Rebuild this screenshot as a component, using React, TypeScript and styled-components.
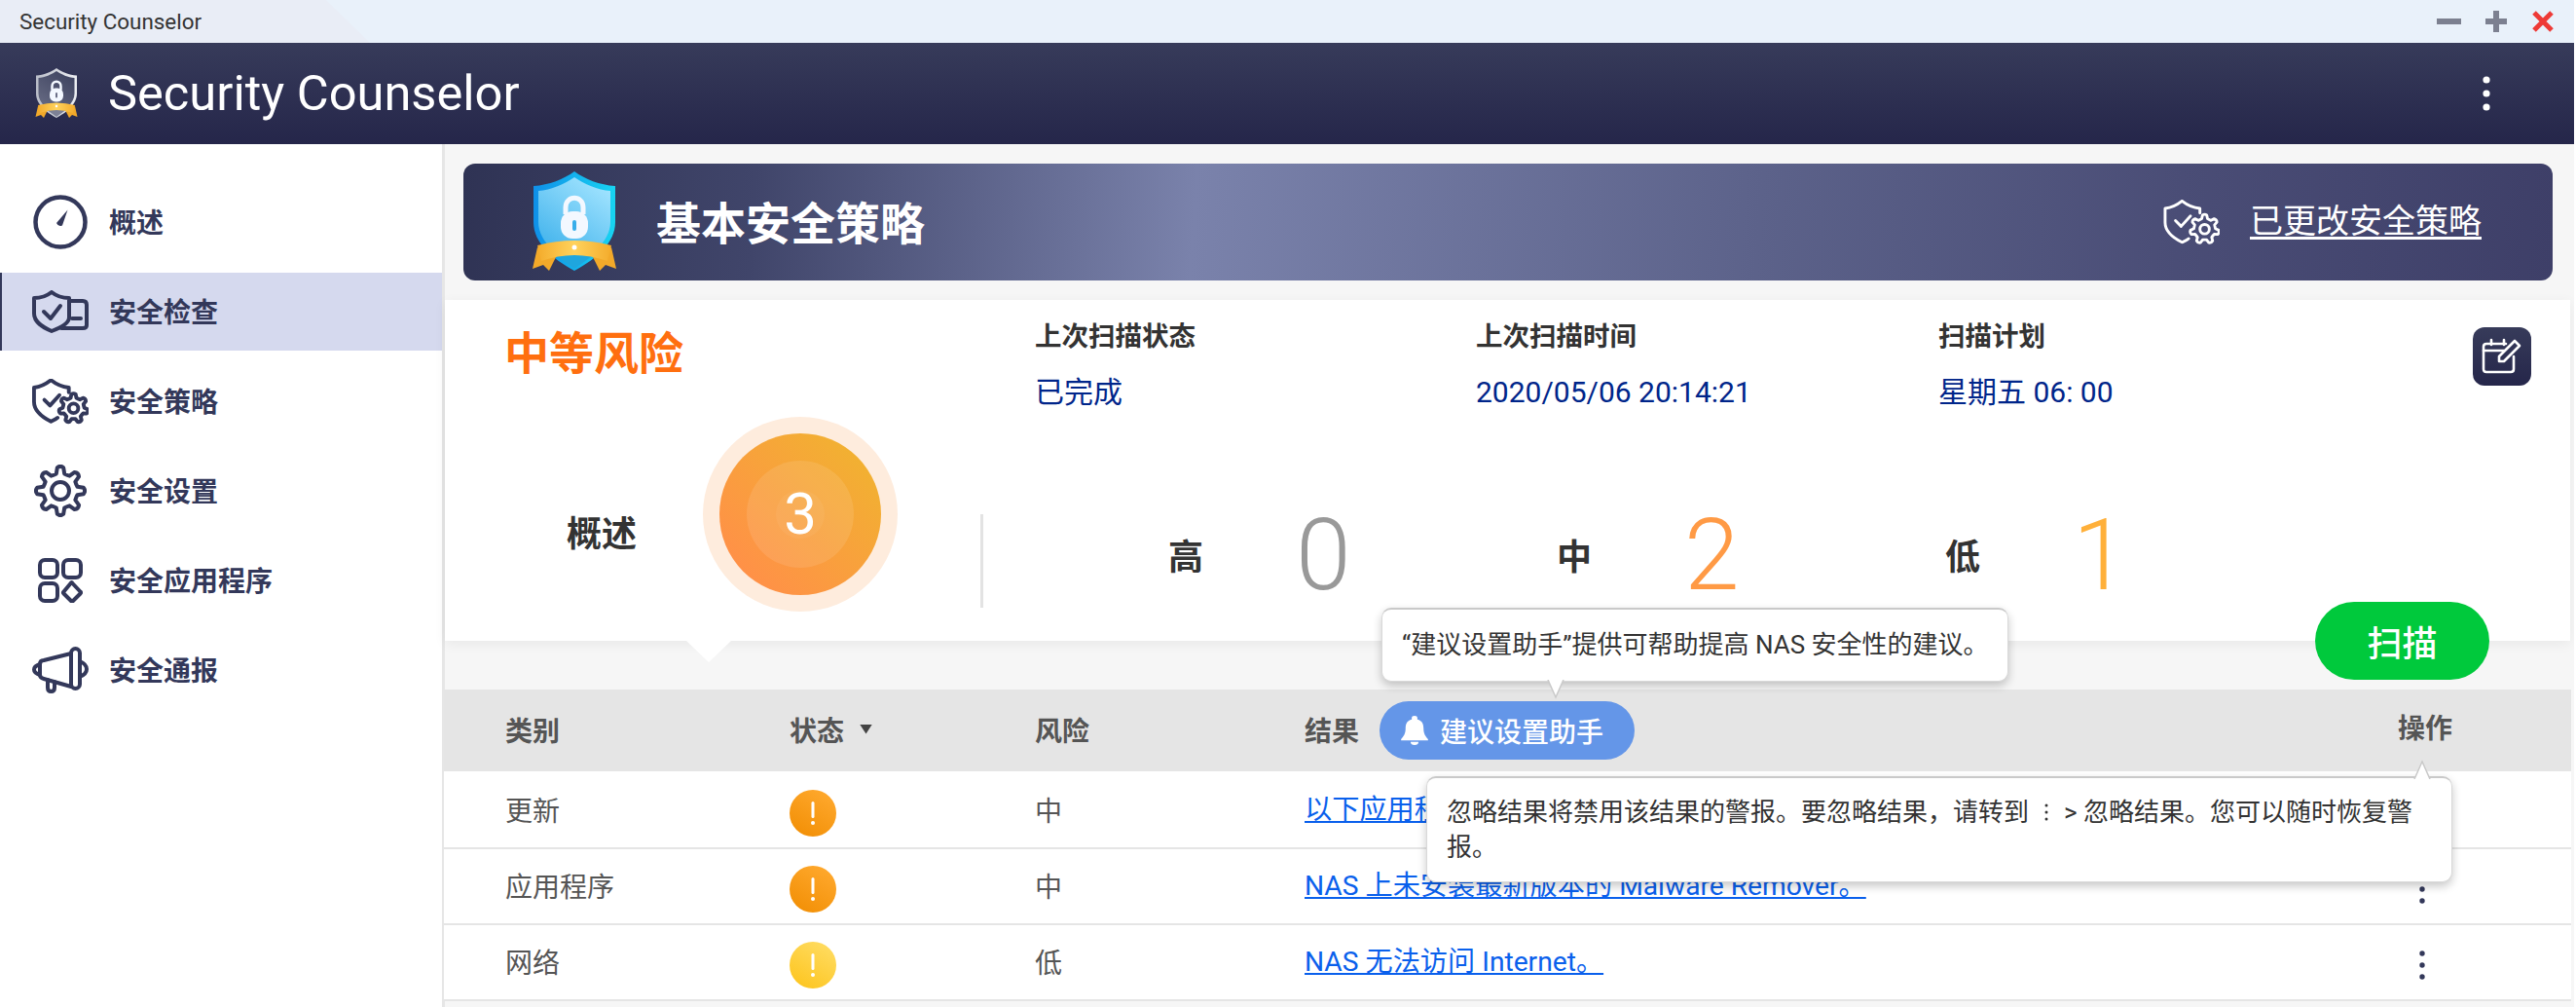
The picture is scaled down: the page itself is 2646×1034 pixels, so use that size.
import React, { useId } from "react";
import styled, { createGlobalStyle } from "styled-components";

const Global = createGlobalStyle`
  html, body { margin: 0; padding: 0; background: #fff; }
  body { font-family: Roboto, "Noto Sans CJK SC", sans-serif; overflow: hidden; }
  * { box-sizing: border-box; }
`;

const Win = styled.div`
  width: 2644px;
  height: 1034px;
  display: flex;
  flex-direction: column;
  overflow: hidden;
`;
const TitleBar = styled.div`
  height: 44px;
  flex: none;
  display: flex;
  align-items: center;
  justify-content: space-between;
  background: #e9f1fa;
`;
const TitleTab = styled.div`
  height: 44px;
  width: 380px;
  padding-left: 20px;
  display: flex;
  align-items: center;
  font-size: 22.4px;
  color: #333;
  background: #e9edf6;
  clip-path: polygon(0 0, 335px 0, 380px 100%, 0 100%);
`;
const WinControls = styled.div`
  display: flex;
  align-items: center;
  gap: 24px;
  padding-right: 20px;
`;
const AppHeader = styled.header`
  height: 104px;
  flex: none;
  display: flex;
  align-items: center;
  padding: 0 86px 0 35px;
  background: linear-gradient(#373b5a, #25264a);
  color: #fff;
`;
const AppTitle = styled.h1`
  margin: 0 0 0 30px;
  font-size: 50.6px;
  font-weight: 400;
  line-height: 56px;
  flex: 1;
`;
const Body = styled.div`
  flex: 1;
  display: flex;
  min-height: 0;
`;
const Sidebar = styled.nav`
  width: 457px;
  flex: none;
  padding-top: 40px;
  background: #fff;
  border-right: 3px solid #e6e6e6;
  display: flex;
  flex-direction: column;
  gap: 12px;
`;
const NavItem = styled.div<{ $active?: boolean }>`
  height: 80px;
  display: flex;
  align-items: center;
  gap: 21px;
  padding-left: 33px;
  font-size: 28px;
  font-weight: 700;
  color: #33385a;
  background: ${(p) => (p.$active ? "#d5d9ee" : "transparent")};
  box-shadow: ${(p) => (p.$active ? "inset 2px 0 0 #33385a" : "none")};
`;
const NavIcon = styled.span`
  width: 58px;
  flex: none;
  display: flex;
  justify-content: center;
`;
const NavLabel = styled.span`
  padding-bottom: 3px;
`;
const Content = styled.main`
  flex: 1;
  min-width: 0;
  background: #f6f6f6;
  display: flex;
  flex-direction: column;
`;
const Banner = styled.section`
  height: 120px;
  flex: none;
  margin: 20px 22px 20px 19px;
  border-radius: 12px;
  display: flex;
  align-items: center;
  padding: 0 73px 0 70px;
  color: #fff;
  background: linear-gradient(94deg, #2f3354 0%, #40456a 14%, #7a82ab 35%, #5c628a 62%, #4a4d76 82%, #3e3f68 100%);
`;
const BannerTitle = styled.h2`
  margin: 0 0 4px 40px;
  font-size: 46px;
  font-weight: 700;
  flex: 1;
`;
const BannerLink = styled.a`
  margin: 0 0 2px 31px;
  font-size: 34px;
  line-height: 44px;
  text-decoration: underline;
  text-underline-offset: 4px;
`;
const Panel = styled.section`
  position: relative;
  height: 350px;
  flex: none;
  margin-right: 4px;
  padding-top: 20px;
  background: #fff;
  box-shadow: 0 3px 12px rgba(0, 0, 0, 0.06);
`;
const PanelTop = styled.div`
  display: grid;
  grid-template-columns: 606px 453px 475px 1fr auto;
`;
const RiskTitle = styled.div`
  padding-left: 61px;
  margin-top: 5px;
  font-size: 46px;
  line-height: 60px;
  font-weight: 700;
  color: #ff6f0f;
`;
const InfoLabel = styled.div`
  padding-top: 1px;
  font-size: 27.5px;
  line-height: 34px;
  font-weight: 700;
  color: #333;
`;
const InfoValue = styled.div`
  margin-top: 23px;
  font-size: 30px;
  line-height: 34px;
  color: #00258a;
`;
const EditButton = styled.div`
  margin: 8px 40px 0 0;
  width: 60px;
  height: 60px;
  border-radius: 12px;
  display: flex;
  align-items: center;
  justify-content: center;
  background: linear-gradient(#373b5a, #25264a);
`;
const Overview = styled.div`
  display: flex;
  align-items: flex-start;
  padding-left: 125px;
  margin-top: 8px;
`;
const OverviewLabel = styled.div`
  width: 72px;
  margin-top: 96px;
  font-size: 36px;
  line-height: 50px;
  font-weight: 700;
  color: #333;
`;
const Halo = styled.div`
  margin-left: 68px;
  width: 200px;
  height: 200px;
  flex: none;
  border-radius: 50%;
  background: #feecdd;
  display: flex;
  align-items: center;
  justify-content: center;
`;
const Disc = styled.div`
  width: 166px;
  height: 166px;
  border-radius: 50%;
  background: linear-gradient(225deg, #f2b032 15%, #ff9147 85%);
  display: flex;
  align-items: center;
  justify-content: center;
`;
const DiscRing = styled.div`
  width: 110px;
  height: 110px;
  border-radius: 50%;
  background: rgba(255, 255, 255, 0.1);
  display: flex;
  align-items: center;
  justify-content: center;
`;
const DiscCore = styled.div`
  width: 50px;
  height: 50px;
  border-radius: 50%;
  background: rgba(255, 255, 255, 0.05);
  display: flex;
  align-items: center;
  justify-content: center;
  color: #fff;
  font-size: 60px;
  font-weight: 400;
  line-height: 50px;
`;
const VRule = styled.div`
  margin: 100px 0 0 85px;
  width: 3px;
  height: 96px;
  background: #e3e3e3;
`;
const Stats = styled.div`
  margin: 92px 0 0 190px;
  display: flex;
`;
const Stat = styled.div`
  width: 399px;
  display: flex;
  align-items: center;
  gap: 95px;
`;
const StatLabel = styled.div`
  width: 36px;
  margin-top: -2px;
  font-size: 36px;
  font-weight: 700;
  color: #333;
`;
const StatValue = styled.div<{ $color: string }>`
  font-size: 102px;
  font-weight: 300;
  line-height: 100px;
  color: ${(p) => p.$color};
`;
const ScanButton = styled.button`
  position: absolute;
  left: 1921px;
  top: 310px;
  z-index: 2;
  width: 179px;
  height: 80px;
  border: 0;
  border-radius: 40px;
  background: #00c93c;
  color: #fff;
  font-family: inherit;
  font-size: 36px;
  font-weight: 500;
`;
const Notch = styled.div`
  position: absolute;
  left: 248px;
  top: 100%;
  width: 46px;
  height: 22px;
  background: #fff;
  clip-path: polygon(0 0, 100% 0, 50% 100%);
`;
const Table = styled.section`
  margin: 50px 3px 0 -1px;
`;
const HeaderRow = styled.div`
  height: 84px;
  display: grid;
  grid-template-columns: 292px 252px 277px 1123px 1fr;
  padding: 0 0 3px 63px;
  align-items: center;
  background: #e5e5e5;
  font-size: 28px;
  font-weight: 700;
  color: #555;
`;
const HeaderCell = styled.div`
  display: flex;
  align-items: center;
`;
const SortMark = styled.span`
  margin-left: 16px;
  width: 13px;
  height: 10px;
  background: #444;
  clip-path: polygon(0 0, 100% 0, 50% 100%);
`;
const Pill = styled.div`
  position: relative;
  margin: 3px 0 0 21px;
  width: 262px;
  height: 60px;
  border-radius: 30px;
  background: #6496e8;
  color: #fff;
  font-weight: 500;
  display: flex;
  align-items: center;
  padding-left: 21px;
  gap: 11px;
`;
const Tip = styled.div`
  position: absolute;
  z-index: 5;
  background: #fff;
  color: #333;
  font-size: 26px;
  font-weight: 400;
  line-height: 36px;
  border: 1px solid #d8d8d8;
  border-top: 2px solid #c9c9c9;
  border-radius: 10px;
  box-shadow: 0 4px 10px rgba(0, 0, 0, 0.22);
`;
const TipAbove = styled(Tip)`
  left: 2px;
  bottom: calc(100% + 20px);
  width: 644px;
  height: 76px;
  padding: 18px 0 0 20px;
  white-space: nowrap;
`;
const ActionLabel = styled.span`
  position: relative;
  display: block;
  line-height: 34px;
`;
const TipBelow = styled(Tip)`
  right: 0;
  top: calc(100% + 31px);
  width: 1054px;
  height: 109px;
  padding: 17px 30px 0 20px;
`;
const TipArrow = styled.svg<{ $up?: boolean }>`
  position: absolute;
  display: block;
  ${(p) => (p.$up ? "top: -19px; right: 20px;" : "bottom: -19px; left: 168px;")}
`;
const Row = styled.div`
  height: 78px;
  display: grid;
  grid-template-columns: 292px 252px 277px 1123px 1fr;
  padding: 0 0 2px 63px;
  align-items: center;
  background: #fff;
  border-bottom: 2px solid #e5e5e5;
  font-size: 28px;
  color: #555;
  &:nth-child(2) {
    height: 80px;
    padding-bottom: 0;
  }
`;
const StatusIcon = styled.svg`
  display: block;
  margin-top: 7px;
`;
const LinkCell = styled.a`
  color: #0a60ec;
  font-size: 28.2px;
  line-height: 34px;
  padding-top: 2px;
  text-decoration: underline;
  white-space: nowrap;
`;
const RowKebab = styled.svg`
  display: block;
  margin: 7px 0 0 22px;
`;
const InlineKebab = styled.svg`
  margin: 0 16px;
  vertical-align: -1px;
`;

const INK = "#33385a";

const gearPath = (cx: number, cy: number, rOut: number, rIn: number, n: number) => {
  const pt = (r: number, a: number) => `${(cx + r * Math.cos(a)).toFixed(2)} ${(cy + r * Math.sin(a)).toFixed(2)}`;
  const step = (Math.PI * 2) / n;
  let d = "";
  for (let i = 0; i < n; i++) {
    const a = i * step - Math.PI / 2;
    const w1 = step * 0.17;
    const w2 = step * 0.3;
    d += `${i === 0 ? "M" : "L"}${pt(rIn, a - w2)} L${pt(rOut, a - w1)} Q${pt(rOut * 1.1, a)} ${pt(rOut, a + w1)} L${pt(rIn, a + w2)} Q${pt(rIn * 0.97, a + step / 2)} ${pt(rIn, a + step - w2)} `;
  }
  return d + "Z";
};

const ShieldOutline = "M39 14V9C30 8 25 5 20 1C15 5 10 8 2 9V24C2 33 10 40 20 45C22 44 25 43 27 41";

const PolicyIcon = ({ color, sw }: { color: string; sw: number }) => (
  <svg width="58" height="47" viewBox="0 0 60 48" fill="none" stroke={color} strokeWidth={sw} strokeLinecap="round" strokeLinejoin="round">
    <path d={ShieldOutline} />
    <path d="M13 22l6 6 10-11" />
    <path d={gearPath(44, 31, 15, 11.5, 7)} />
    <circle cx="44" cy="31" r="5" />
  </svg>
);

const GaugeIcon = () => (
  <svg width="56" height="56" viewBox="0 0 56 56" fill="none">
    <circle cx="28" cy="28" r="25.5" stroke={INK} strokeWidth="4.5" />
    <path d="M24 29L35.500 15.500L30 31.500Q26 33.500 24 29Z" fill={INK} />
  </svg>
);

const CheckIcon = () => (
  <svg width="58" height="44" viewBox="0 0 58 44" fill="none" stroke={INK} strokeWidth="4" strokeLinecap="round" strokeLinejoin="round">
    <path d="M20 2C25 6 31 8 38 8V28C38 34 28 39 20 42C11 38 2 33 2 24V8C9 8 15 6 20 2Z" />
    <path d="M12 22l7 7 10-13" />
    <path d="M38 11H52Q56 11 56 15V36Q56 39 52 39H30" />
    <path d="M41 29H50" />
  </svg>
);

const GearIcon = () => (
  <svg width="54" height="54" viewBox="0 0 54 54" fill="none" stroke={INK} strokeWidth="4" strokeLinejoin="round">
    <path d={gearPath(27, 27, 24, 18, 8)} />
    <circle cx="27" cy="27" r="9" />
  </svg>
);

const AppsIcon = () => (
  <svg width="46" height="46" viewBox="0 0 46 46" fill="none" stroke={INK} strokeWidth="4" strokeLinejoin="round">
    <rect x="2" y="2" width="18" height="18" rx="5" />
    <rect x="26" y="2" width="18" height="18" rx="5" />
    <rect x="2" y="26" width="18" height="18" rx="5" />
    <path d="M35 25.5L43.5 34.5Q44.5 35.5 43.5 36.5L36 44Q35 45 34 44L26.5 36.5Q25.5 35.5 26.5 34.5L34 25.5Q35 24.5 35 25.5Z" />
  </svg>
);

const MegaphoneIcon = () => (
  <svg width="58" height="48" viewBox="0 0 58 48" fill="none" stroke={INK} strokeWidth="4" strokeLinecap="round" strokeLinejoin="round">
    <path d="M40 7L12 14Q8 14 8 18V29Q8 32 12 33L40 41" />
    <rect x="40" y="2" width="9" height="41" rx="4.5" />
    <path d="M8 18Q2 20 2 23.5Q2 27 8 29" />
    <path d="M49 15Q56 18 56 23Q56 28 49 31" />
    <path d="M16 34V42Q16 46 19.5 46Q23 46 23 42V36" />
  </svg>
);

const Shield = ({ w, h, palette }: { w: number; h: number; palette: string[] }) => {
  const id = useId().replace(/[^a-zA-Z0-9]/g, "");
  const [o1, o2, i1, i2, tip] = palette;
  return (
    <svg width={w} height={h} viewBox="0 0 88 104">
      <defs>
        <linearGradient id={`${id}o`} x1="0" y1="0" x2="1" y2="0">
          <stop offset="0" stopColor={o1} />
          <stop offset="1" stopColor={o2} />
        </linearGradient>
        <linearGradient id={`${id}i`} x1="0.8" y1="0" x2="0.2" y2="1">
          <stop offset="0" stopColor={i1} />
          <stop offset="1" stopColor={i2} />
        </linearGradient>
        <linearGradient id={`${id}r`} x1="0" y1="0" x2="1" y2="0">
          <stop offset="0" stopColor="#f4ac2c" />
          <stop offset="0.5" stopColor="#ffd25c" />
          <stop offset="1" stopColor="#f4ac2c" />
        </linearGradient>
      </defs>
      <path d="M44 0C55 8 70 14 86 15V52C86 76 62 92 44 102C26 92 2 76 2 52V15C18 14 33 8 44 0Z" fill={`url(#${id}o)`} />
      <path d="M44 6C54 13 68 19 81 20V52C81 72 60 88 44 97C28 88 7 72 7 52V20C20 19 34 13 44 6Z" fill={`url(#${id}i)`} />
      <path d="M35 44V37C35 24 53 24 53 37V44" fill="none" stroke="#f3f8ff" strokeWidth="5" />
      <rect x="30" y="41" width="28" height="28" rx="12" fill="#f3f8ff" />
      <rect x="42" y="50" width="4" height="11" rx="2" fill={i2} />
      <path d="M22 84L44 100L66 84Z" fill={tip} />
      <path d="M6 78L1 100L12 96L18 102L26 86Z" fill="#f2a92a" />
      <path d="M82 78L87 100L76 96L70 102L62 86Z" fill="#f2a92a" />
      <path d="M6 76Q44 66 82 76L78 92Q44 80 10 92Z" fill={`url(#${id}r)`} />
      <circle cx="44" cy="78" r="2.5" fill="#fff" />
    </svg>
  );
};

const Status = ({ tone }: { tone: "orange" | "yellow" }) => {
  const id = useId().replace(/[^a-zA-Z0-9]/g, "");
  const [a, b] = tone === "orange" ? ["#f28f05", "#ffa92e"] : ["#fdc51f", "#ffdc62"];
  return (
    <StatusIcon width="48" height="48" viewBox="0 0 48 48">
      <defs>
        <linearGradient id={id} x1="0.2" y1="1" x2="0.8" y2="0">
          <stop offset="0" stopColor={a} />
          <stop offset="1" stopColor={b} />
        </linearGradient>
      </defs>
      <circle cx="24" cy="24" r="24" fill={`url(#${id})`} />
      <rect x="22.5" y="12" width="3" height="17" rx="1.5" fill="#fff" />
      <circle cx="24" cy="34" r="2" fill="#fff" />
    </StatusIcon>
  );
};

const Kebab = () => (
  <RowKebab width="6" height="30" viewBox="0 0 6 30" fill={INK}>
    <circle cx="3" cy="3" r="2.7" />
    <circle cx="3" cy="15" r="2.7" />
    <circle cx="3" cy="27" r="2.7" />
  </RowKebab>
);

const BLUE = ["#0f8fe8", "#18d4f2", "#a2e4ff", "#38aeea", "#1fa6de"];
const SILVER = ["#b9bdc8", "#eceef2", "#3e4360", "#6a6e86", "#7d8196"];

export default function App() {
  return (
    <>
      <Global />
      <Win>
        <TitleBar>
          <TitleTab>Security Counselor</TitleTab>
          <WinControls>
            <svg width="25" height="24" viewBox="0 0 25 24"><rect x="0" y="9" width="25" height="6" fill="#7c8090" /></svg>
            <svg width="24" height="24" viewBox="0 0 24 24"><path d="M9 1h6v8h8v6h-8v8H9v-8H1V9h8z" fill="#7c8090" /></svg>
            <svg width="24" height="24" viewBox="0 0 24 24"><path d="M3 3L21 21M21 3L3 21" stroke="#ee3a36" strokeWidth="5" /></svg>
          </WinControls>
        </TitleBar>
        <AppHeader>
          <Shield w={46} h={52} palette={SILVER} />
          <AppTitle>Security Counselor</AppTitle>
          <svg width="8" height="36" viewBox="0 0 8 36" fill="#fff">
            <circle cx="4" cy="4" r="3.6" />
            <circle cx="4" cy="18" r="3.6" />
            <circle cx="4" cy="32" r="3.6" />
          </svg>
        </AppHeader>
        <Body>
          <Sidebar>
            <NavItem><NavIcon><GaugeIcon /></NavIcon><NavLabel>概述</NavLabel></NavItem>
            <NavItem $active><NavIcon><CheckIcon /></NavIcon><NavLabel>安全检查</NavLabel></NavItem>
            <NavItem><NavIcon><PolicyIcon color={INK} sw={4} /></NavIcon><NavLabel>安全策略</NavLabel></NavItem>
            <NavItem><NavIcon><GearIcon /></NavIcon><NavLabel>安全设置</NavLabel></NavItem>
            <NavItem><NavIcon><AppsIcon /></NavIcon><NavLabel>安全应用程序</NavLabel></NavItem>
            <NavItem><NavIcon><MegaphoneIcon /></NavIcon><NavLabel>安全通报</NavLabel></NavItem>
          </Sidebar>
          <Content>
            <Banner>
              <Shield w={88} h={104} palette={BLUE} />
              <BannerTitle>基本安全策略</BannerTitle>
              <PolicyIcon color="#fff" sw={3} />
              <BannerLink>已更改安全策略</BannerLink>
            </Banner>
            <Panel>
              <PanelTop>
                <RiskTitle>中等风险</RiskTitle>
                <div>
                  <InfoLabel>上次扫描状态</InfoLabel>
                  <InfoValue>已完成</InfoValue>
                </div>
                <div>
                  <InfoLabel>上次扫描时间</InfoLabel>
                  <InfoValue>2020/05/06 20:14:21</InfoValue>
                </div>
                <div>
                  <InfoLabel>扫描计划</InfoLabel>
                  <InfoValue>星期五 06: 00</InfoValue>
                </div>
                <EditButton>
                  <svg width="42" height="38" viewBox="0 0 42 38" fill="none" stroke="#fff" strokeWidth="2.6" strokeLinecap="round" strokeLinejoin="round">
                    <path d="M33 19V32Q33 35 30 35H5Q2 35 2 32V9Q2 6 5 6H25" />
                    <path d="M2 13H23M10 2V7M23 2V7" />
                    <path d="M18 24L18 19L34 3L39 8L23 24Z" />
                  </svg>
                </EditButton>
              </PanelTop>
              <Overview>
                <OverviewLabel>概述</OverviewLabel>
                <Halo>
                  <Disc>
                    <DiscRing>
                      <DiscCore>3</DiscCore>
                    </DiscRing>
                  </Disc>
                </Halo>
                <VRule />
                <Stats>
                  <Stat><StatLabel>高</StatLabel><StatValue $color="#999">0</StatValue></Stat>
                  <Stat><StatLabel>中</StatLabel><StatValue $color="#ff9a45">2</StatValue></Stat>
                  <Stat><StatLabel>低</StatLabel><StatValue $color="#ffb03a">1</StatValue></Stat>
                </Stats>
              </Overview>
              <ScanButton>扫描</ScanButton>
              <Notch />
            </Panel>
            <Table>
              <HeaderRow>
                <HeaderCell>类别</HeaderCell>
                <HeaderCell>状态<SortMark /></HeaderCell>
                <HeaderCell>风险</HeaderCell>
                <HeaderCell>
                  结果
                  <Pill>
                    <svg width="30" height="32" viewBox="0 0 26 34" preserveAspectRatio="none" fill="#fff">
                      <path d="M13 1a2.5 2.5 0 0 1 2.5 2.5V5C20 6.500 21 10 21 15C21 21 23 24 25 26.500V28H1V26.500C3 24 5 21 5 15C5 10 6 6.500 10.500 5V3.500A2.500 2.500 0 0 1 13 1Z" />
                      <path d="M9.500 29.500H16.500A3.500 3.500 0 0 1 9.500 29.500Z" />
                    </svg>
                    建议设置助手
                    <TipAbove>
                      “建议设置助手”提供可帮助提高 NAS 安全性的建议。
                      <TipArrow width="20" height="20" viewBox="0 0 20 20">
                        <path d="M2 0L10 18L18 0" fill="#fff" stroke="#c9c9c9" strokeWidth="1.5" />
                      </TipArrow>
                    </TipAbove>
                  </Pill>
                </HeaderCell>
                <HeaderCell>
                  <ActionLabel>
                    操作
                    <TipBelow>
                      忽略结果将禁用该结果的警报。要忽略结果，请转到
                      <InlineKebab width="4" height="20" viewBox="0 0 4 20" fill="#333">
                        <circle cx="2" cy="3" r="1.500" />
                        <circle cx="2" cy="10" r="1.500" />
                        <circle cx="2" cy="17" r="1.500" />
                      </InlineKebab>
                      &gt; 忽略结果。您可以随时恢复警报。
                      <TipArrow $up width="20" height="20" viewBox="0 0 20 20">
                        <path d="M2 20L10 2L18 20" fill="#fff" stroke="#c9c9c9" strokeWidth="1.500" />
                      </TipArrow>
                    </TipBelow>
                  </ActionLabel>
                </HeaderCell>
              </HeaderRow>
              <Row>
                <div>更新</div>
                <Status tone="orange" />
                <div>中</div>
                <LinkCell>以下应用程序未更新至最新版本。</LinkCell>
                <Kebab />
              </Row>
              <Row>
                <div>应用程序</div>
                <Status tone="orange" />
                <div>中</div>
                <LinkCell>NAS 上未安装最新版本的 Malware Remover。</LinkCell>
                <Kebab />
              </Row>
              <Row>
                <div>网络</div>
                <Status tone="yellow" />
                <div>低</div>
                <LinkCell>NAS 无法访问 Internet。</LinkCell>
                <Kebab />
              </Row>
            </Table>
          </Content>
        </Body>
      </Win>
    </>
  );
}
